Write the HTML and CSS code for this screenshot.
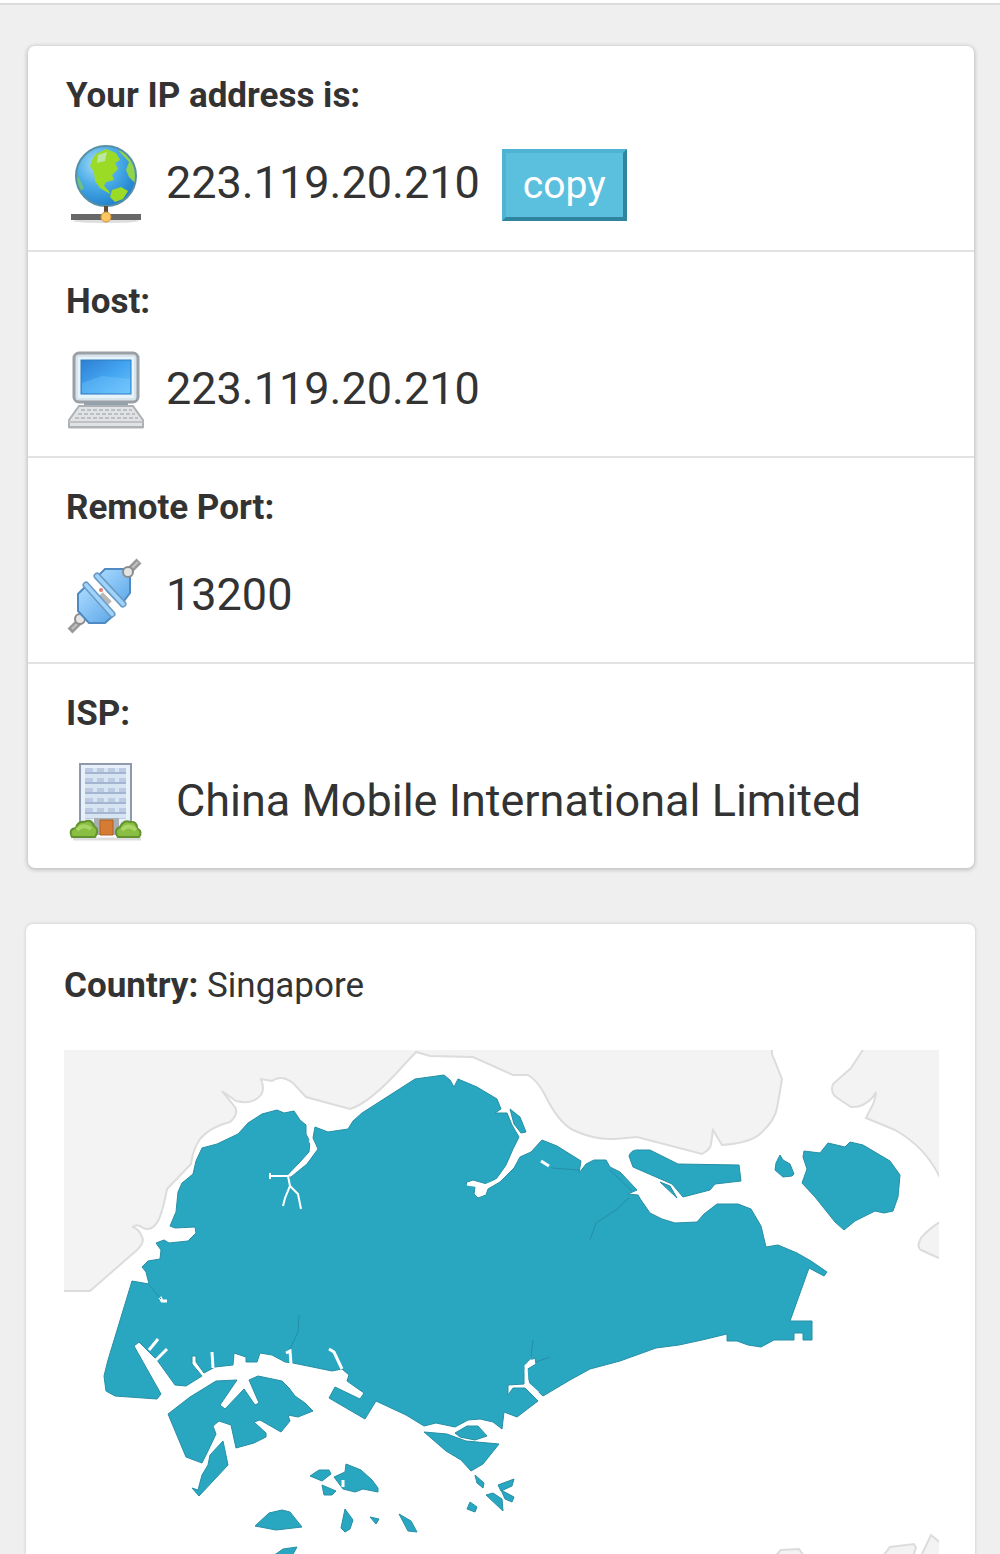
FILE: index.html
```html
<!DOCTYPE html>
<html lang="en">
<head>
<meta charset="utf-8">
<meta name="viewport" content="width=device-width, initial-scale=1">
<title>Your IP address</title>
<link rel="stylesheet" href="styles.css">
</head>
<body>
<header class="topbar"></header>
<main class="page">
  <section class="card">
    <div class="row">
      <h2 class="label">Your IP address is:</h2>
      <div class="entry">
        <svg class="icon" viewBox="0 0 80 80" aria-hidden="true">
          <defs>
            <radialGradient id="sea" cx=".35" cy=".3" r=".75"><stop offset="0" stop-color="#a5dcf6"/><stop offset=".5" stop-color="#49abe6"/><stop offset="1" stop-color="#1e7ecb"/></radialGradient>
            <clipPath id="globe"><circle cx="40" cy="31" r="30"/></clipPath>
          </defs>
          <ellipse cx="40" cy="76" rx="33" ry="2" fill="#ddd"/>
          <circle cx="40" cy="31" r="30" fill="url(#sea)"/>
          <g clip-path="url(#globe)" fill="#9cdb25">
            <path d="M30 9 40 4 50 8 54 15 49 18 52 24 46 30 48 35 40 37 38 41 43 46 44 49 34 43 29 36 28 27 24 21 27 13Z"/>
            <path d="M52 5 60 8 70 20 69 38 63 32 60 25 63 17Z" fill="#8fd44a"/>
            <path d="M46 45 55 42 62 46 57 54 49 57 44 52Z"/>
            <path d="M12 31 18 43 15 46 10 39Z" opacity=".5"/>
            <path d="M32 10 41 7 39 16 31 18Z" fill="#bde5a3"/>
          </g>
          <circle cx="40" cy="31" r="30" fill="none" stroke="#5590a8" stroke-width="2"/>
          <path d="M40 61V69" stroke="#654b37" stroke-width="4"/>
          <path d="M5 72H75" stroke="#686868" stroke-width="6"/>
          <circle cx="40" cy="72" r="5" fill="#ffc75f" stroke="#d3923d"/>
        </svg>
        <span class="value">223.119.20.210</span>
        <button class="copy" type="button">copy</button>
      </div>
    </div>
    <div class="row">
      <h2 class="label">Host:</h2>
      <div class="entry">
        <svg class="icon" viewBox="0 0 80 80" aria-hidden="true">
          <defs><linearGradient id="screen" x1="0" y1="0" x2="1" y2="1"><stop offset="0" stop-color="#2d7fd2"/><stop offset=".5" stop-color="#43a4f0"/><stop offset="1" stop-color="#6bc3ff"/></linearGradient></defs>
          <rect x="2" y="73" width="76" height="5" rx="2" fill="#dadada"/>
          <path d="M18 50H62V57H18Z" fill="#8fa3b1"/>
          <rect x="8" y="2" width="64" height="49" rx="5" fill="#d8e4ec" stroke="#9aa0a5" stroke-width="3"/>
          <rect x="12" y="6" width="56" height="41" fill="#e8f4fc"/>
          <rect x="15" y="9" width="50" height="34" fill="url(#screen)" stroke="#307dbd"/>
          <path d="M16 32 36 25 64 28V42H16Z" fill="#85cfff" opacity=".3"/>
          <path d="M13 55H67L77 69V76H3V69Z" fill="#e0e2e4" stroke="#adb1b5" stroke-width="2"/>
          <path d="M15 59H66M12 63H69M9 67H72" stroke="#bbbfc3" stroke-width="2" stroke-dasharray="4 2"/>
          <path d="M3 71H77" stroke="#bfc1c3" stroke-width="2"/>
        </svg>
        <span class="value">223.119.20.210</span>
      </div>
    </div>
    <div class="row">
      <h2 class="label">Remote Port:</h2>
      <div class="entry">
        <svg class="icon" viewBox="0 0 80 80" aria-hidden="true">
          <defs><linearGradient id="plug" x1="0" y1="0" x2="1" y2="1"><stop offset="0" stop-color="#addcff"/><stop offset="1" stop-color="#5ba6e8"/></linearGradient></defs>
          <path d="M4 74 14 64M63 14 73 4" stroke="#999" stroke-width="7"/>
          <path d="M6 72 14 64M64 13 72 5" stroke="#c1c1c1" stroke-width="2"/>
          <circle cx="14" cy="62" r="5" fill="#e4e4e4" stroke="#8c8c8c" stroke-width="2"/>
          <path d="M35 37 44 46M41 32 50 41" stroke="#b8b8b8" stroke-width="5"/>
          <path d="M20 29 12 37V54L23 66H39L48 58Z" fill="url(#plug)" stroke="#4f8bc2" stroke-width="2"/>
          <path d="M31 20 39 12H58L64 18V36L55 48Z" fill="url(#plug)" stroke="#4f8bc2" stroke-width="2"/>
          <path d="M20 28 46 57M31 19 57 47" stroke="#6b9ac4" stroke-width="7" stroke-linecap="round"/>
          <path d="M20 28 46 57M31 19 57 47" stroke="#9ed3fb" stroke-width="4" stroke-linecap="round"/>
          <circle cx="35" cy="33" r="2" fill="#e27a7a"/>
          <circle cx="62" cy="15" r="5" fill="#e4e4e4" stroke="#8c8c8c" stroke-width="2"/>
        </svg>
        <span class="value">13200</span>
      </div>
    </div>
    <div class="row">
      <h2 class="label">ISP:</h2>
      <div class="entry entry-wide">
        <svg class="icon" viewBox="0 0 80 80" aria-hidden="true">
          <path d="M7 76H75" stroke="#ddd" stroke-width="3"/>
          <path d="M14 1H65V71H14Z" fill="#e8f0f9" stroke="#8e99ac" stroke-width="2"/>
          <path d="M19 5H60V56H19Z" fill="#bccbe2"/>
          <path d="M19 13H60M19 23H60M19 33H60M19 43H60M19 53H60M29 5V56M40 5V56M51 5V56" stroke="#d7e5f3" stroke-width="4"/>
          <path d="M19 10H60M19 20H60M19 30H60M19 40H60M19 50H60" stroke="#a4b5d1" stroke-width="2"/>
          <path d="M28 55H53V72H28Z" fill="#a9aeb5"/>
          <path d="M34 57H47V72H34Z" fill="#d67b32" stroke="#ad6025"/>
          <path d="M6 74Q2 66 10 65 12 58 18 59 25 55 28 63 34 67 29 74ZM52 74Q47 67 54 64 58 56 64 59 71 58 71 65 77 69 73 74Z" fill="#89be43" stroke="#62932e" stroke-width="2"/>
          <path d="M11 67Q17 60 25 66M56 67Q62 60 70 67" fill="none" stroke="#a9d466" stroke-width="4"/>
        </svg>
        <span class="value">China Mobile International Limited</span>
      </div>
    </div>
  </section>

  <section class="card card-map">
    <p class="country"><strong>Country:</strong> Singapore</p>
    <svg class="map" viewBox="64 1050 875 504" role="img" aria-label="Map of Singapore">
      <g class="neighbour">
        <path d="M59 1291H90L137 1250Q145 1242 142 1237 139 1229 133 1227 137 1223 143 1228 153 1232 159 1219 163 1210 167 1189L191 1164Q193 1149 200 1139 210 1127 230 1122 239 1114 235 1107L222 1091 236 1101Q253 1105 261 1095 265 1089 261 1079L272 1081Q281 1074 293 1083L306 1097 350 1109Q370 1103 403 1066L416 1052 430 1056 473 1057 513 1075H528Q537 1080 545 1095 558 1122 573 1130 594 1140 615 1139L637 1137 702 1154Q711 1149 711 1144L713 1130 722 1145Q751 1143 761 1133 775 1120 777 1108 780 1091 782 1079L772 1054V1045H59Z"/>
        <path d="M866 1045 851 1068 833 1084Q830 1092 836 1097L851 1107Q863 1108 873 1097L876 1092Q875 1102 871 1108L866 1118 895 1130Q927 1148 941 1180V1045Z"/>
        <path d="M943 1220Q928 1229 921 1238 916 1247 921 1250L943 1260Z"/>
        <path d="M775 1556 781 1550 799 1549 804 1556ZM883 1556 890 1547 914 1544 916 1548 913 1556ZM921 1556 931 1535 943 1545V1556Z"/>
      </g>
      <g class="land">
        <path d="M132 1281 149 1284 146 1272 142 1267 148 1261 160 1259 161 1250 156 1243 164 1240 169 1243 188 1241 196 1233 195 1227 175 1228 170 1226 176 1212 178 1192 182 1183 193 1174 196 1161 202 1148 217 1144 238 1134 248 1123 262 1114 277 1110 284 1113 294 1111 300 1120 306 1125V1134L310 1142 309 1152 288 1175 291 1177 307 1164 318 1149 313 1138 315 1127 328 1132 348 1129 353 1121 362 1113 415 1079 444 1075 450 1080 454 1087 458 1079 477 1087 497 1099 501 1109 495 1113 507 1113 512 1125 519 1137 513 1149 506 1165 497 1178 487 1184 473 1180 465 1183 475 1187 474 1194 478 1198 486 1195 488 1189 500 1182 514 1168 520 1157 531 1152 542 1140 557 1146 581 1161 579 1173 586 1164 594 1160 606 1160 610 1167 620 1172 637 1190 628 1194 638 1195 641 1200 650 1213 662 1219 675 1223 697 1222 704 1214 717 1204H738L751 1209 761 1226 766 1247 778 1245 797 1253 811 1261 827 1272 824 1276 809 1268 790 1321H812V1340H803V1333H794V1340H774L761 1347 748 1345 737 1341H727V1334L702 1340 679 1345 656 1348 620 1361 590 1369 570 1380 543 1396 530 1384 526 1370 536 1364 535 1358 528 1361 524 1370V1384L508 1385V1395L513 1388H525L538 1401 517 1417 504 1412 502 1429 493 1422 480 1419 468 1420 455 1427 436 1423 424 1426 406 1415 376 1401 365 1419 329 1398 335 1387 360 1399 364 1393 347 1381 349 1375 342 1369 332 1371 293 1363 285 1362 272 1355 260 1353 257 1362H246V1357L234 1353 233 1365 215 1367 204 1373 196 1362V1356H192V1364L202 1376 186 1386 175 1385 157 1360 139 1342 134 1346 161 1394 157 1399 115 1396 106 1391 104 1376 108 1360Z"/>
        <path d="M168 1414 190 1397 216 1381 237 1380 220 1405 225 1409 244 1389 255 1405 259 1403 249 1380 258 1376 282 1381 289 1388 295 1396 305 1403 313 1411 298 1417 288 1415 290 1421 281 1432 260 1420 254 1422 266 1433V1437L254 1443 236 1448 231 1425 219 1421 213 1426 216 1434 207 1453 202 1463 186 1457Z"/>
        <path d="M223 1441 228 1465 199 1496 192 1488 198 1490 202 1475 208 1465 210 1455Z"/>
        <path d="M629 1156Q631 1150 637 1150H650L678 1164 739 1165 741 1181 715 1184 710 1190 683 1197 672 1184 633 1167ZM660 1182 670 1186 677 1198Z"/>
        <path d="M780 1155 783 1160 790 1164 794 1174 792 1176 783 1177 775 1170 776 1163Z"/>
        <path d="M804 1151 820 1153 828 1143 845 1147 850 1142 863 1145 890 1161 900 1175 898 1197 893 1211 884 1213 875 1211 855 1221 844 1230 835 1222 815 1197 802 1183 807 1169 803 1157Z"/>
        <path d="M510 1109 520 1117 526 1132 521 1133 514 1124Z"/>
        <path d="M455 1433 467 1426 478 1426 487 1436 475 1440 460 1437ZM424 1432 447 1434 466 1441 499 1444 483 1464 471 1471 461 1460 446 1451Z"/>
        <path d="M310 1476 319 1470 329 1470 331 1474 322 1481ZM334 1477 345 1472 346 1464 361 1470 372 1480 378 1488V1492L363 1489 355 1492 343 1489ZM322 1485 336 1491 332 1495H324Z"/>
        <path d="M255 1526 269 1513 282 1510 290 1512 302 1527 276 1530ZM345 1509 353 1520 350 1529 345 1532 341 1528ZM370 1517 379 1519 376 1524ZM399 1514 411 1521 417 1532 408 1531ZM273 1556 283 1549 297 1547 292 1556Z"/>
        <path d="M475 1475 484 1483 483 1488 477 1483ZM470 1502 477 1507 475 1512 467 1509ZM498 1485 514 1479 512 1486 501 1491ZM486 1495 493 1493 502 1499 503 1511ZM501 1490 514 1497 512 1502 505 1499Z"/>
      </g>
      <g class="creek">
        <path d="M289 1176H271M270 1173V1179M288 1176 290 1186 285 1198 283 1206M290 1186 298 1194 301 1209" stroke-width="2"/>
        <path d="M289 1176 308 1157 314 1148 310 1140M467 1184 480 1186 478 1195M480 1188 497 1181 512 1163 518 1152M532 1360 526 1366 527 1383 538 1393"/>
        <path d="M149 1350 158 1339M156 1360 167 1349M213 1368 212 1352M291 1364 290 1351 286 1353M342 1369 334 1352 329 1349M160 1297 162 1301H167M541 1161 549 1166M343 1487V1480"/>
      </g>
      <g class="river">
        <path d="M149 1285 161 1299M290 1349 298 1332 299 1315M629 1198 616 1210 596 1223 590 1240M531 1357 533 1340M536 1362 550 1357M551 1168 579 1170M610 1170 632 1191"/>
      </g>
    </svg>
  </section>
</main>
</body>
</html>
```
FILE: styles.css
```css
* {
  box-sizing: border-box;
}

body {
  margin: 0;
  background: #efefef;
  color: #333;
  font-family: Roboto, "Liberation Sans", sans-serif;
  font-size: 35px;
  line-height: 42px;
}

.topbar {
  height: 5px;
  background: #fff;
  border-bottom: 2px solid #dcdcdc;
}

.page {
  display: flex;
  flex-direction: column;
  gap: 56px;
  padding: 41px 26px 0 28px;
}

.card {
  background: #fff;
  border-radius: 7px;
  box-shadow: 0 1px 4px 1px rgba(0, 0, 0, 0.2);
}

.row {
  padding: 29px 38px 25px;
  border-bottom: 2px solid #e2e2e2;
}

.row:last-child {
  border-bottom: 0;
}

.label {
  margin: 0 0 28px;
  font-size: 35px;
  font-weight: 700;
}

.entry {
  display: flex;
  align-items: center;
  gap: 20px;
}

.entry-wide {
  gap: 30px;
}

.icon {
  flex: none;
  width: 80px;
  height: 80px;
}

.value {
  padding-bottom: 4px;
  font-size: 45px;
  line-height: 52px;
}

.copy {
  height: 72px;
  margin-left: 2px;
  padding: 0 17px;
  border: 4px solid;
  border-color: #4fb4d3 #2f85a0 #2f85a0 #4fb4d3;
  background: #5bc0de;
  color: #fff;
  font-family: inherit;
  font-size: 39px;
  line-height: 46px;
}

.card-map {
  margin: 0 -1px 0 -2px;
  padding: 41px 36px 0 38px;
  border-radius: 7px 7px 0 0;
  box-shadow: 0 0 3px 1px rgba(0, 0, 0, 0.1);
}

.country {
  margin: 0 0 43px;
}

.map {
  display: block;
  width: 100%;
}

.neighbour {
  fill: #f3f3f3;
  stroke: #dcdcdc;
  stroke-width: 2;
}

.land {
  fill: #29a7c1;
  stroke: #278fa5;
  stroke-width: 1;
}

.creek {
  fill: none;
  stroke: #fff;
  stroke-width: 3;
}

.river {
  fill: none;
  stroke: #258fa7;
  stroke-width: 1;
}
```
